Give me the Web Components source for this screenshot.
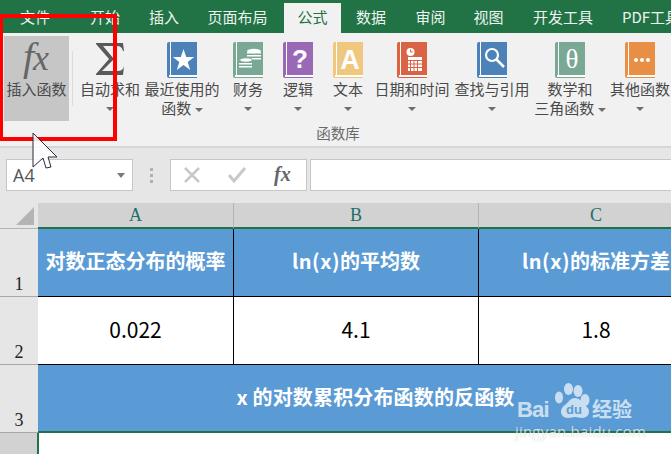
<!DOCTYPE html>
<html lang="zh"><head><meta charset="utf-8"><style>
html,body{margin:0;padding:0;width:671px;height:454px;overflow:hidden;background:#e6e6e6}
body{font-family:"Noto Sans CJK SC","Noto Sans",sans-serif}
</style></head><body>
<xl-app></xl-app>
<script>
const CJK='"Noto Sans CJK SC","Noto Sans",sans-serif';
const book=(c,inner)=>`<svg width="30" height="36" viewBox="0 0 30 36"><path d="M0 2a2 2 0 0 1 2-2h28v33H6c-2 0-3 .6-3 2h27v1H2a2 2 0 0 1-2-2z" fill="${c}"/><rect x="3" y="0" width="1" height="33" fill="#fff"/><rect x="2" y="33" width="28" height="2" fill="#fff"/>${inner}</svg>`;
const icons={
 fx:`<svg width="65" height="36" viewBox="0 0 65 36" style="overflow:visible"><text x="19" y="28" font-family="Liberation Serif,serif" font-style="italic" font-size="40" fill="#666">f</text><text x="29" y="28" font-family="Liberation Serif,serif" font-style="italic" font-size="36" fill="#666">x</text></svg>`,
 sum:`<svg width="28" height="36" viewBox="0 0 28 36"><g transform="translate(0 1)"><path d="M0 0h27l1 8h-1c-1-4-3-5-7-5H7l11 13L6 28h15c4 0 6-1 7-5l-1 9H0v-1l13-15L0 1z" fill="#595959"/></g></svg>`,
 star:book('#4d82b8','<path d="M16.500 7l2.700 8h8l-6.500 5 2.500 8-6.700-5-6.700 5 2.500-8-6.500-5h8z" fill="#fff"/>'),
 coin:book('#79a894','<g fill="#fff"><ellipse cx="21" cy="9" rx="7" ry="2.200"/><rect x="14" y="10" width="14" height="1.500"/><rect x="14" y="13" width="14" height="1.500"/><rect x="14" y="16" width="14" height="1.500"/></g><g fill="#fff"><ellipse cx="13" cy="18" rx="6.500" ry="2.200" stroke="#79a894"/><rect x="6" y="21" width="13" height="1.500"/><rect x="6" y="24" width="13" height="1.500"/></g>'),
 q:book('#9a69b5','<text x="17" y="26" text-anchor="middle" font-family="Liberation Sans,sans-serif" font-weight="700" font-size="26" fill="#fff">?</text>'),
 a:book('#efc77f','<text x="17" y="27" text-anchor="middle" font-family="Liberation Sans,sans-serif" font-weight="700" font-size="27" fill="#fff">A</text>'),
 cal:book('#d96344','<circle cx="13.500" cy="10" r="4" fill="#fff"/><path d="M13.500 7.500v2.500h2.300" stroke="#d96344" fill="none"/><g fill="#fff"><path d="M11 15h14v14H11z"/></g><path d="M13.500 18v11M17 18v11M20.500 18v11M11 18.500h14M11 22h14M11 25.500h14" stroke="#d96344"/>'),
 search:book('#4d82b8','<circle cx="15" cy="13" r="6" fill="none" stroke="#fff" stroke-width="2.200"/><path d="M19.500 17.500l7.500 7.500" stroke="#fff" stroke-width="2.500"/>'),
 theta:book('#79a894','<text x="17" y="26" text-anchor="middle" font-family="Liberation Serif,serif" font-size="27" fill="#fff">θ</text>'),
 more:book('#e88e45','<g fill="#fff"><circle cx="11" cy="18" r="2"/><circle cx="17" cy="18" r="2"/><circle cx="23" cy="18" r="2"/></g>')
};
function def(name,css,html,init){customElements.define(name,class extends HTMLElement{constructor(){super();this.attachShadow({mode:'open'}).innerHTML=`<style>${css}</style>${typeof html==='function'?html(this):html}`}connectedCallback(){init&&init(this)}})}

def('xl-tab',`:host{display:flex;align-items:center;justify-content:center;height:30px;box-sizing:border-box;padding-bottom:3px;margin-top:3px;color:#eef5f0;font-size:15px;white-space:nowrap;flex:none}
:host([active]){background:#f1f1f1;color:#217346}`,`<slot></slot>`);

def('xl-tabs',`:host{display:flex;height:33px;background:#217346;overflow:hidden;font-family:${CJK}}`,
`<xl-tab style="width:73px;padding-right:3px">文件</xl-tab><xl-tab style="width:64px">开始</xl-tab><xl-tab style="width:54px">插入</xl-tab><xl-tab style="width:93px">页面布局</xl-tab><xl-tab active style="width:57px">公式</xl-tab><xl-tab style="width:60px">数据</xl-tab><xl-tab style="width:59px">审阅</xl-tab><xl-tab style="width:57px">视图</xl-tab><xl-tab style="width:92px">开发工具</xl-tab><xl-tab style="width:75px;justify-content:flex-start;padding-left:13px">PDF工具</xl-tab>`);

def('xl-cmd',`:host{display:flex;flex-direction:column;align-items:center;flex:none;color:#4a4a4a;font-size:15px;line-height:19px;height:85px;box-sizing:border-box;padding-top:6px;white-space:nowrap}
:host([hot]){background:#c6c6c6}
.i{height:36px;display:flex;justify-content:center;margin-bottom:1px}
.c{width:0;height:0;border:4px solid transparent;border-top:4px solid #6e6e6e;border-bottom:0;display:inline-block;vertical-align:middle}
.l{text-align:center}.l div{height:19px}
.a{margin-top:9px;height:4px;line-height:0}
.a .c{display:block}`,
h=>{const lines=(h.getAttribute('label')||'').split('|');const two=lines.length>1;const caret=h.hasAttribute('caret');
return `<div class="i">${icons[h.getAttribute('icon')]}</div><div class="l">${lines.map((l,i)=>`<div>${l}${two&&i==1&&caret?' <span class="c"></span>':''}</div>`).join('')}</div>${!two&&caret?'<div class="a"><span class="c"></span></div>':''}`});

def('xl-ribbon',`:host{display:block;height:115px;box-sizing:border-box;background:#f1f1f1;border-bottom:2px solid #d6d6d6;font-family:${CJK}}
.r{display:flex;padding:3px 0 0 4px;height:85px;overflow:hidden}
.sep{width:1px;height:55px;background:#dcdcdc;margin:15px 4px 0 3px;flex:none}
.g{text-align:center;font-size:14.500px;color:#6a6a6a;line-height:18px;margin:3px 0 0 0;padding-left:5px}`,
`<div class="r">
<xl-cmd hot icon="fx" label="插入函数" style="width:65px"></xl-cmd><div class="sep"></div>
<xl-cmd caret icon="sum" label="自动求和" style="width:66px"></xl-cmd>
<xl-cmd caret icon="star" label="最近使用的|函数" style="width:78px"></xl-cmd>
<xl-cmd caret icon="coin" label="财务" style="width:54px"></xl-cmd>
<xl-cmd caret icon="q" label="逻辑" style="width:46px"></xl-cmd>
<xl-cmd caret icon="a" label="文本" style="width:54px"></xl-cmd>
<xl-cmd caret icon="cal" label="日期和时间" style="width:74px"></xl-cmd>
<xl-cmd caret icon="search" label="查找与引用" style="width:86px"></xl-cmd>
<xl-cmd caret icon="theta" label="数学和|三角函数" style="width:70px"></xl-cmd>
<xl-cmd caret icon="more" label="其他函数" style="width:70px"></xl-cmd>
</div><div class="g">函数库</div>`);

def('xl-formula',`:host{display:flex;height:55px;box-sizing:border-box;padding:11px 0 0 6px;background:#e6e6e6;font-family:${CJK}}
.b{height:32px;box-sizing:border-box;background:#fff;border:1px solid #c6c6c6;display:flex;align-items:center;flex:none}
.name{width:127px;padding:0 7px 0 6px;justify-content:space-between;font-family:"Open Sans","Liberation Sans",sans-serif;font-size:18px;color:#555}
.c{width:0;height:0;border:4px solid transparent;border-top:5px solid #7a7a7a;border-bottom:0}
.dots{width:3px;margin:0 17px;display:flex;flex-direction:column;gap:3px;justify-content:center;height:32px;flex:none}
.dots i{height:3px;background:#b0b0b0}
.btn{width:137px;gap:26px;padding:0 0 0 12px;box-sizing:border-box}
.in{flex:1;margin-left:3px;border-right:0}`,
`<div class="b name"><span>A4</span><span class="c"></span></div>
<div class="dots"><i></i><i></i><i></i></div>
<div class="b btn">
<svg width="18" height="18" viewBox="0 0 18 18"><path d="M2 2l14 14M16 2L2 16" stroke="#c8c8c8" stroke-width="2.500"/></svg>
<svg width="20" height="18" viewBox="0 0 20 18"><path d="M2 9l5 6L18 2" fill="none" stroke="#c8c8c8" stroke-width="3"/></svg>
<svg width="20" height="24" viewBox="0 0 20 24"><text x="1" y="18" font-family="Liberation Serif,serif" font-style="italic" font-weight="700" font-size="20" fill="#666">fx</text></svg>
</div><div class="b in"></div>`);

def('xl-sheet',`:host{display:grid;grid-template-columns:38px 196px 245px 234px;grid-template-rows:26px 68px 68px 68px 21px;height:251px;overflow:hidden;font-family:${CJK};background:#fff}
.hc{background:#d2d2d2;border-right:1px solid #b4b4b4;color:#1b6f6a;font-family:"Liberation Serif",serif;font-size:18px;display:flex;align-items:center;justify-content:center;box-sizing:border-box;border-bottom:2px solid #217346}
.corner{background:#e6e6e6;border:0;border-bottom:1px solid #b4b4b4;display:block}
.corner svg{display:block;margin:4px 0 0 16px}
.rh{background:#e6e6e6;border-bottom:1px solid #a8a8a8;box-sizing:border-box;font-family:"Liberation Serif",serif;font-size:18px;color:#222;display:flex;align-items:flex-end;justify-content:center;line-height:22px;padding-bottom:1px}
.cell{display:flex;align-items:center;justify-content:center;box-sizing:border-box;font-size:20px;border-right:1px solid #000;border-bottom:1px solid #000;white-space:nowrap;padding-bottom:4px}
.h{background:#5b9bd5;color:#fff;font-weight:700}
.h span{letter-spacing:.5px}
.v{background:#fff;color:#000;font-size:21px}
.m{grid-column:2 / 5;background:#5b9bd5;color:#fff;font-weight:700;border-right:0;border-bottom:2px solid #217346;padding-bottom:4px;letter-spacing:.15px}
.sel{background:#d2d2d2;border:0}
.a4{grid-column:2 / 5;border-left:2px solid #217346;margin-left:-1px;background:#fff}
.last{border-right:0}`,
`<div class="hc corner"><svg width="18" height="18"><path d="M18 0v18H0z" fill="#b4b4b4"/></svg></div><div class="hc">A</div><div class="hc">B</div><div class="hc last">C</div>
<div class="rh">1</div><div class="cell h">对数正态分布的概率</div><div class="cell h"><span>ln(x)</span>的平均数</div><div class="cell h last"><span>ln(x)</span>的标准方差</div>
<div class="rh">2</div><div class="cell v">0.022</div><div class="cell v">4.1</div><div class="cell v last">1.8</div>
<div class="rh">3</div><div class="cell m"><span>x 的对数累积分布函数的反函数</span></div>
<div class="rh sel"></div><div class="a4"></div>`);

def('xl-mark',`:host{display:block;position:absolute;left:0;top:0;width:671px;height:454px;pointer-events:none;overflow:hidden}
.rect{position:absolute;box-sizing:border-box;left:-1.500px;top:14px;width:118px;height:127px;border:4.500px solid #ff0000}
.cur{position:absolute;left:30px;top:130px}
.wm{position:absolute;left:514px;top:380px;width:122px;height:72px;color:#fff;opacity:.68}
.wm svg{position:absolute;left:0;top:0}
.bai{position:absolute;left:3px;top:15px;font:700 22px/30px "Liberation Sans",sans-serif;letter-spacing:-.8px}
.du{position:absolute;left:52px;top:22px;font:700 13px/16px "Liberation Sans",sans-serif;color:#5b9bd5}
.jy{position:absolute;left:78px;top:16px;font:700 20px/26px ${CJK}}
.url{position:absolute;left:1px;top:42px;font:15px/18px "Open Sans",sans-serif;letter-spacing:.2px;white-space:nowrap;text-shadow:0 0 1px rgba(70,70,70,.5)}`,
`<div class="rect"></div>
<svg class="cur" width="30" height="42" viewBox="0 0 30 42"><path d="M3 3v34l10-9 3 10 5-1-3-10h9z" fill="#fff" fill-opacity=".85" stroke="#2a2a3a" stroke-width="1" stroke-linejoin="round"/></svg>
<div class="wm"><svg width="122" height="50" viewBox="0 0 122 50"><g fill="#fff"><ellipse cx="54.500" cy="9" rx="4.500" ry="6"/><ellipse cx="64" cy="11" rx="4.500" ry="6"/><ellipse cx="45" cy="17.500" rx="4" ry="6"/><ellipse cx="71" cy="20" rx="4.500" ry="6"/><path d="M61 18c5 0 7 4 10 7s4 4 4 7-3 6-7 6c-3 0-4-1-7-1s-4 1-7 1c-4 0-7-3-7-6s1-5 4-7 5-7 10-7z"/></g></svg>
<span class="bai">Bai</span><span class="du">du</span><span class="jy">经验</span><span class="url">jingyan.baidu.com</span></div>`);

def('xl-app',`:host{display:block;width:671px;height:454px;position:relative;overflow:hidden;background:#e6e6e6}`,
`<xl-tabs></xl-tabs><xl-ribbon></xl-ribbon><xl-formula></xl-formula><xl-sheet></xl-sheet><xl-mark></xl-mark>`);
</script></body></html>
